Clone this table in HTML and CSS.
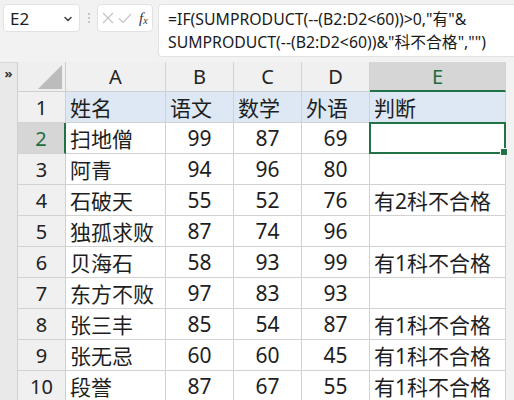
FILE: index.html
```html
<!DOCTYPE html>
<html>
<head>
<meta charset="utf-8">
<link rel="stylesheet" href="styles.css">
</head>
<body>
<div class="toolbar">
  <div class="namebox">
    <span class="name">E2</span>
    <svg class="chev" width="10" height="8" viewBox="0 0 10 8"><path d="M2 2.5 L5 5.5 L8 2.5" fill="none" stroke="#444" stroke-width="1.6" stroke-linecap="round" stroke-linejoin="round"/></svg>
  </div>
  <div class="dots"><i></i><i></i><i></i></div>
  <div class="fxbox">
    <svg width="14" height="14" viewBox="0 0 14 14"><path d="M2 2 L12 12 M12 2 L2 12" stroke="#c4c4c4" stroke-width="1.2" fill="none"/></svg>
    <svg width="16" height="14" viewBox="0 0 16 14"><path d="M2 7.5 L6 11.5 L14 3" stroke="#c4c4c4" stroke-width="1.2" fill="none"/></svg>
    <span class="fx">f<sub>x</sub></span>
  </div>
  <div class="formula">=IF(SUMPRODUCT(--(B2:D2&lt;60))&gt;0,"有"&amp;<br>SUMPRODUCT(--(B2:D2&lt;60))&amp;"科不合格","")</div>
</div>
<div class="main">
  <div class="side"><span>»</span></div>
  <div class="sheet">
    <div class="corner"><svg width="24" height="24" viewBox="0 0 24 24"><path d="M24 0 L24 24 L0 24 Z" fill="#bcbcbc"/></svg></div>
    <div class="colhead">A</div>
    <div class="colhead">B</div>
    <div class="colhead">C</div>
    <div class="colhead">D</div>
    <div class="colhead sel">E</div>

    <div class="rowhead">1</div>
    <div class="cell hdr">姓名</div><div class="cell hdr">语文</div><div class="cell hdr">数学</div><div class="cell hdr">外语</div><div class="cell hdr">判断</div>

    <div class="rowhead sel">2</div>
    <div class="cell">扫地僧</div><div class="cell num">99</div><div class="cell num">87</div><div class="cell num">69</div><div class="cell active"></div>

    <div class="rowhead">3</div>
    <div class="cell">阿青</div><div class="cell num">94</div><div class="cell num">96</div><div class="cell num">80</div><div class="cell"></div>

    <div class="rowhead">4</div>
    <div class="cell">石破天</div><div class="cell num">55</div><div class="cell num">52</div><div class="cell num">76</div><div class="cell">有2科不合格</div>

    <div class="rowhead">5</div>
    <div class="cell">独孤求败</div><div class="cell num">87</div><div class="cell num">74</div><div class="cell num">96</div><div class="cell"></div>

    <div class="rowhead">6</div>
    <div class="cell">贝海石</div><div class="cell num">58</div><div class="cell num">93</div><div class="cell num">99</div><div class="cell">有1科不合格</div>

    <div class="rowhead">7</div>
    <div class="cell">东方不败</div><div class="cell num">97</div><div class="cell num">83</div><div class="cell num">93</div><div class="cell"></div>

    <div class="rowhead">8</div>
    <div class="cell">张三丰</div><div class="cell num">85</div><div class="cell num">54</div><div class="cell num">87</div><div class="cell">有1科不合格</div>

    <div class="rowhead">9</div>
    <div class="cell">张无忌</div><div class="cell num">60</div><div class="cell num">60</div><div class="cell num">45</div><div class="cell">有1科不合格</div>

    <div class="rowhead">10</div>
    <div class="cell">段誉</div><div class="cell num">87</div><div class="cell num">67</div><div class="cell num">55</div><div class="cell">有1科不合格</div>
  </div>
</div>
</body>
</html>
```
FILE: styles.css
```css
* { box-sizing: border-box; }
html, body { margin: 0; padding: 0; }
body {
  width: 514px;
  height: 400px;
  overflow: hidden;
  background: #f2f2f2;
  font-family: "Noto Sans", "Noto Sans CJK SC", sans-serif;
  color: #1e1e1e;
}
.toolbar {
  display: flex;
  align-items: flex-start;
  padding: 4px 0 0 3px;
  height: 62px;
}
.namebox {
  width: 77px;
  height: 28px;
  background: #fff;
  border: 1px solid #e2e2e2;
  border-radius: 4px;
  display: flex;
  align-items: center;
  justify-content: space-between;
  padding: 0 6px 0 6px;
}
.name { font-size: 17px; line-height: 1; }
.chev { margin-top: 1px; }
.dots {
  width: 17px;
  height: 28px;
  display: flex;
  flex-direction: column;
  align-items: center;
  justify-content: center;
  gap: 2px;
}
.dots i { width: 2px; height: 2px; background: #b8b8b8; border-radius: 1px; }
.fxbox {
  width: 56px;
  height: 28px;
  background: #fff;
  border: 1px solid #e2e2e2;
  border-radius: 4px;
  display: flex;
  align-items: center;
  padding-left: 3px;
  gap: 2px;
}
.fx {
  font-family: "Liberation Serif", serif;
  font-style: italic;
  font-size: 15px;
  color: #333;
  margin-left: 4px;
}
.fx sub { font-size: 10px; vertical-align: -1px; }
.formula {
  margin-left: 5px;
  flex: 1;
  height: 53px;
  background: #fff;
  border: 1px solid #e2e2e2;
  border-right: none;
  border-radius: 4px 0 0 4px;
  font-size: 15.8px;
  line-height: 23px;
  padding: 3px 0 0 9px;
  white-space: nowrap;
  color: #1a1a1a;
}
.main {
  display: flex;
  align-items: flex-start;
}
.side {
  width: 18px;
  height: 338px;
  background: #e9e9e9;
  border-right: 1px solid #cfcfcf;
  border-top: 1px solid #d8d8d8;
  font-size: 13px;
  text-align: center;
  color: #333;
  line-height: 16px;
  padding-top: 2px;
  font-weight: bold;
}
.sheet {
  display: grid;
  grid-template-columns: 48px 100px 68px 68px 68px 136px;
  grid-template-rows: 30px repeat(10, 31px);
  font-size: 21px;
}
.corner {
  background: #efefef;
  border-right: 1px solid #cfcfcf;
  border-bottom: 1px solid #cfcfcf;
  display: flex;
  align-items: flex-end;
  justify-content: flex-end;
  padding: 0 3px 2px 0;
}
.colhead {
  background: #f0f0f0;
  border-right: 1px solid #d2d2d2;
  border-bottom: 1px solid #cfcfcf;
  display: flex;
  align-items: center;
  justify-content: center;
  color: #222;
  font-size: 20px;
}
.colhead.sel {
  background: #d6d6d6;
  color: #1e6b40;
  border-bottom: 2px solid #217346;
}
.rowhead {
  background: #f0f0f0;
  border-right: 1px solid #cfcfcf;
  border-bottom: 1px solid #d2d2d2;
  display: flex;
  align-items: center;
  justify-content: center;
  color: #222;
  font-size: 20px;
}
.rowhead.sel {
  background: #d6d6d6;
  color: #1e6b40;
  border-right: 2px solid #217346;
}
.cell {
  background: #fff;
  border-right: 1px solid #d2d2d2;
  border-bottom: 1px solid #d2d2d2;
  display: flex;
  align-items: center;
  padding-left: 4px;
  white-space: nowrap;
  overflow: hidden;
}
.cell.hdr { background: #dde8f4; }
.cell.num { justify-content: center; padding-left: 0; }
.cell.active {
  position: relative;
  overflow: visible;
  border: 2px solid #217346;
  margin: -1px 0 0 -1px;
}
.cell.active::after {
  content: "";
  position: absolute;
  right: -4px;
  bottom: -4px;
  width: 6px;
  height: 6px;
  background: #217346;
  border: 1px solid #fff;
}
```
